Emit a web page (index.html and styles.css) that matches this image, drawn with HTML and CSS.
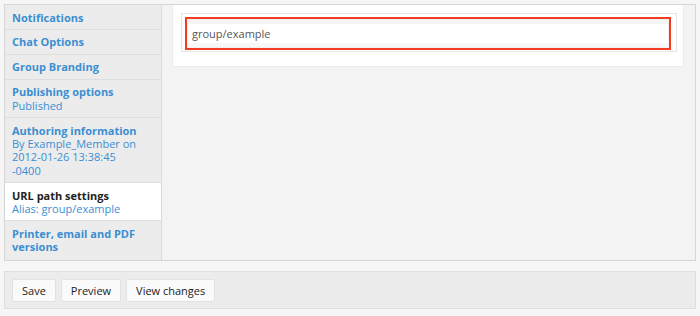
FILE: index.html
```html
<!DOCTYPE html>
<html>
<head>
<meta charset="utf-8">
<link rel="stylesheet" href="styles.css">
</head>
<body>
<div class="tabs-wrap">
  <ul class="tab-list">
    <li class="tab"><a class="tab-title">Notifications</a></li>
    <li class="tab"><a class="tab-title">Chat Options</a></li>
    <li class="tab"><a class="tab-title">Group Branding</a></li>
    <li class="tab"><a class="tab-title">Publishing options</a><span class="tab-summary">Published</span></li>
    <li class="tab"><a class="tab-title">Authoring information</a><span class="tab-summary">By Example_Member on 2012-01-26 13:38:45 -0400</span></li>
    <li class="tab active"><a class="tab-title">URL path settings</a><span class="tab-summary">Alias: group/example</span></li>
    <li class="tab"><a class="tab-title">Printer, email and PDF versions</a></li>
  </ul>
  <div class="pane">
    <div class="pane-box">
      <div class="field">
        <div class="input-error">
          <div class="input">group/example</div>
        </div>
      </div>
    </div>
  </div>
</div>
<div class="actions">
  <button class="btn">Save</button>
  <button class="btn">Preview</button>
  <button class="btn">View changes</button>
</div>
</body>
</html>
```
FILE: styles.css
```css
html, body {
  margin: 0;
  padding: 0;
}
body {
  background: #f6f6f6;
  font-family: "Open Sans", "DejaVu Sans", sans-serif;
  font-size: 11px;
  color: #333;
}
.tabs-wrap {
  margin: 4px 4px 0 4px;
  border: 1px solid #d6d6d6;
  display: flex;
  height: 257px;
  box-sizing: border-box;
  background: #f3f3f3;
}
.tab-list {
  list-style: none;
  margin: 0;
  padding: 0;
  width: 156px;
  flex: none;
  background: #ececec;
  border-right: 1px solid #dadada;
}
.tab {
  padding: 5.5px 18px 5px 7px;
  border-bottom: 1px solid #dedede;
  line-height: 13.4px;
}
.tab:last-child {
  border-bottom: none;
}
.tab-title {
  display: block;
  font-weight: bold;
  color: #3b8ed2;
}
.tab-summary {
  display: block;
  color: #3b8ed2;
}
.tab.active {
  background: #fff;
}
.tab.active .tab-title {
  color: #222;
}
.pane {
  flex: 1;
  padding: 0 11px 0 10px;
}
.pane-box {
  background: #fff;
  border: 1px solid #ebebeb;
  border-top: none;
  padding: 8px 6px 14px 8px;
}
.field {
  border: 1px solid #e6e6e6;
  padding: 3px 5px 1px 3px;
}
.input-error {
  border: 2px solid #f23b20;
}
.input {
  border: 1px solid #f0f0f0;
  box-shadow: inset 0 4px 0 #f5f5f5, inset 0 -4px 0 #f7f7f7;
  height: 29px;
  box-sizing: border-box;
  padding: 0 0 0 4px;
  line-height: 27px;
  font-size: 11px;
  color: #555;
}
.actions {
  margin: 10px 4px 0 4px;
  border: 1px solid #dedede;
  background: #ececec;
  padding: 7px 7px;
  display: flex;
  gap: 5px;
  height: 38px;
  box-sizing: border-box;
}
.btn {
  font-family: "Open Sans", "DejaVu Sans", sans-serif;
  font-size: 11px;
  color: #222;
  background: #fafafa;
  border: 1px solid #e2e2e2;
  border-radius: 2px;
  height: 23px;
  padding: 0 9px;
  margin: 0;
}
```
